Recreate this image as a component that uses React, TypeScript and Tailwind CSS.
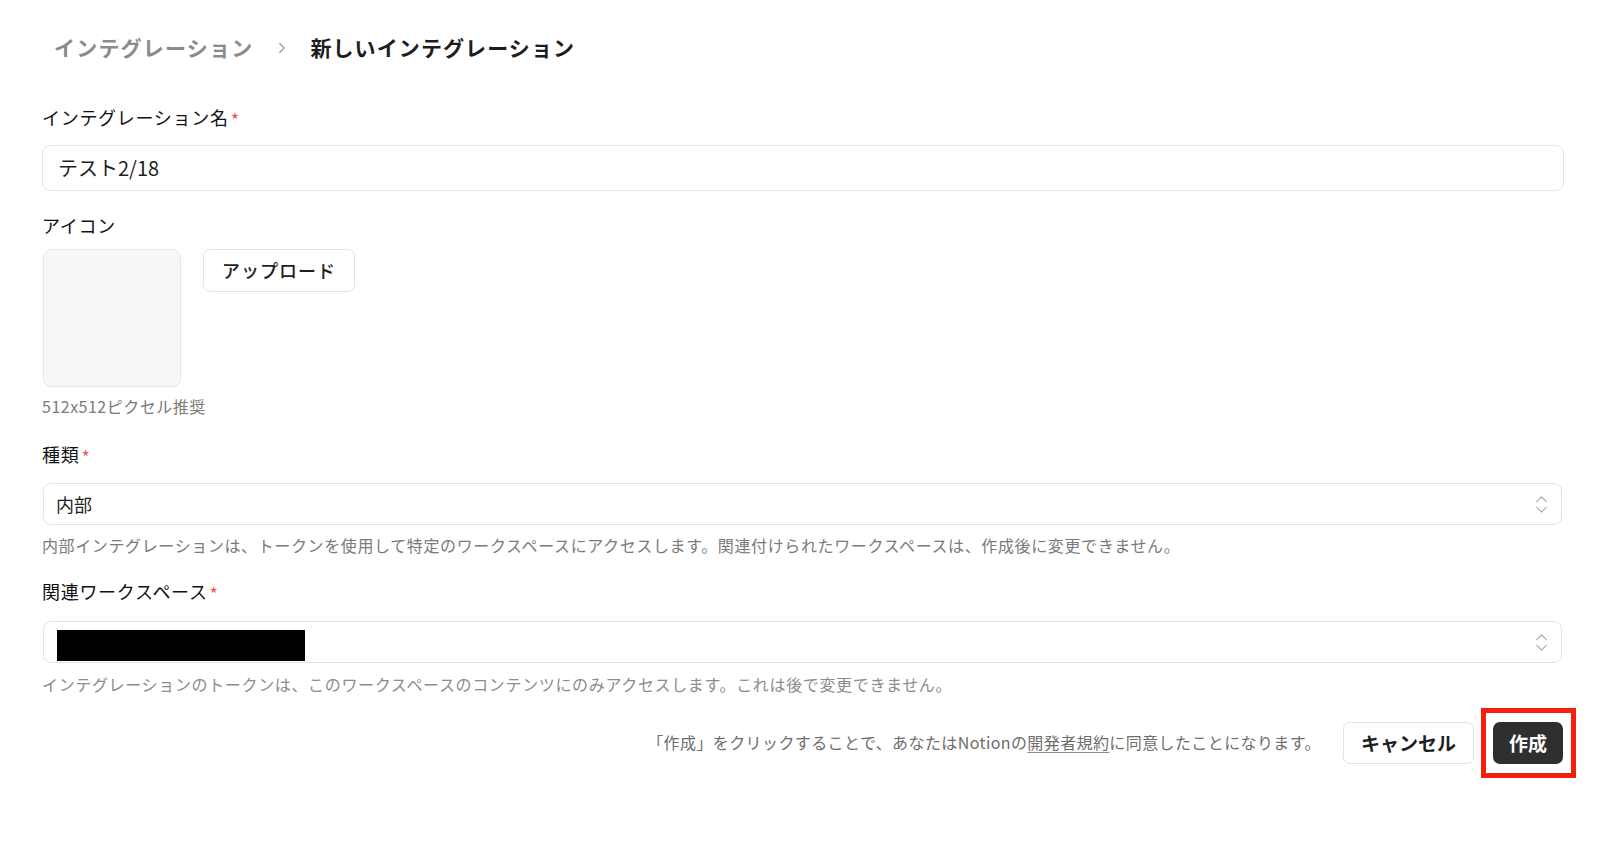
import React from "react";
import { ChevronRight, ChevronsUpDown } from "lucide-react";

const Label = ({ children, required, className = "" }: { children: React.ReactNode; required?: boolean; className?: string }) => (
  <div className={`flex items-center h-[26px] text-[18px] leading-[26px] tracking-[0.7px] font-normal text-[#111111] ${className}`}>
    <span>{children}</span>
    {required && <span className="text-[#eb5757] ml-[2px] text-[18px] leading-[18px] mt-[4px]">*</span>}
  </div>
);

const SelectBox = ({ children, className = "" }: { children: React.ReactNode; className?: string }) => (
  <div className={`ml-[1px] mr-[2px] h-[42px] rounded-[8px] border border-[#e4e3e0] bg-white flex items-center pl-[12px] pr-[8px] ${className}`}>
    <div className="flex-1 flex items-center">{children}</div>
    <ChevronsUpDown size={23} strokeWidth={1.1} className="text-[#a8a6a1]" />
  </div>
);

export default function App() {
  return (
    <div
      className="min-h-[859px] w-full bg-white pl-[42px] pr-[36px] pt-[28px]"
      style={{ fontFamily: '"Noto Sans CJK JP", "Noto Sans", sans-serif' }}
    >
      {/* Breadcrumb */}
      <div className="flex items-center h-[40px] pl-[12px]">
        <span className="text-[21px] tracking-[1.2px] font-bold text-[#8b8b8b]">インテグレーション</span>
        <ChevronRight size={18} strokeWidth={1.6} className="text-[#9a9a9a] ml-[20px] mr-[19px]" />
        <span className="text-[21px] tracking-[1.1px] font-bold text-[#1d1d1d]">新しいインテグレーション</span>
      </div>

      {/* Name */}
      <Label required className="mt-[36px]">インテグレーション名</Label>
      <div className="mt-[15px] h-[46px] rounded-[8px] border border-[#e6e5e3] flex items-center px-[15px] text-[20px] text-[#1f1f1f]">
        テスト2/18
      </div>

      {/* Icon */}
      <Label className="mt-[21px]">アイコン</Label>
      <div className="mt-[11px] flex items-start gap-[22px]">
        <div className="ml-[1px] w-[138px] h-[138px] rounded-[8px] border border-[#e8e7e4] bg-[#f8f7f5]" />
        <div className="h-[43px] rounded-[7px] border border-[#e4e3e0] px-[18px] flex items-center text-[18px] tracking-[1px] font-medium text-[#1f1f1f]">
          アップロード
        </div>
      </div>
      <div className="mt-[8px] h-[22px] leading-[22px] text-[16px] tracking-[0.5px] text-[#7d7a75]">512x512ピクセル推奨</div>

      {/* Type */}
      <Label required className="mt-[24px]">種類</Label>
      <SelectBox className="mt-[16px]">
        <span className="text-[18px] text-[#1f1f1f]">内部</span>
      </SelectBox>
      <div className="mt-[9px] h-[22px] leading-[22px] text-[16px] tracking-[0.62px] text-[#7d7a75]">
        内部インテグレーションは、トークンを使用して特定のワークスペースにアクセスします。関連付けられたワークスペースは、作成後に変更できません。
      </div>

      {/* Workspace */}
      <Label required className="mt-[22px]">関連ワークスペース</Label>
      <SelectBox className="mt-[17px]">
        <div className="w-[248px] h-[31px] bg-black ml-[1px] mt-[6px]" />
      </SelectBox>
      <div className="mt-[10px] h-[22px] leading-[22px] text-[16px] tracking-[0.65px] text-[#8f8c87]">
        インテグレーションのトークンは、このワークスペースのコンテンツにのみアクセスします。これは後で変更できません。
      </div>

      {/* Footer */}
      <div className="mt-[27px] flex items-center justify-end">
        <span className="text-[16px] tracking-[0.4px] text-[#6f6d68] mr-[22px] -mt-[2px]">
          「作成」をクリックすることで、あなたはNotionの
          <span className="underline underline-offset-[3px] decoration-[#8f8c87]">開発者規約</span>
          に同意したことになります。
        </span>
        <div className="h-[42px] rounded-[7px] border border-[#e4e3e0] px-[17px] flex items-center text-[19px] font-semibold text-[#1f1f1f]">
          キャンセル
        </div>
        <div className="relative ml-[19px] mr-[1px]">
          <div className="h-[42px] rounded-[7px] bg-[#2f2f2f] px-[16px] flex items-center text-[19px] font-semibold text-white">
            作成
          </div>
          <div className="absolute -left-[12px] -top-[14px] -right-[13px] -bottom-[14px] border-[5px] border-[#f4200f] pointer-events-none" />
        </div>
      </div>
    </div>
  );
}
